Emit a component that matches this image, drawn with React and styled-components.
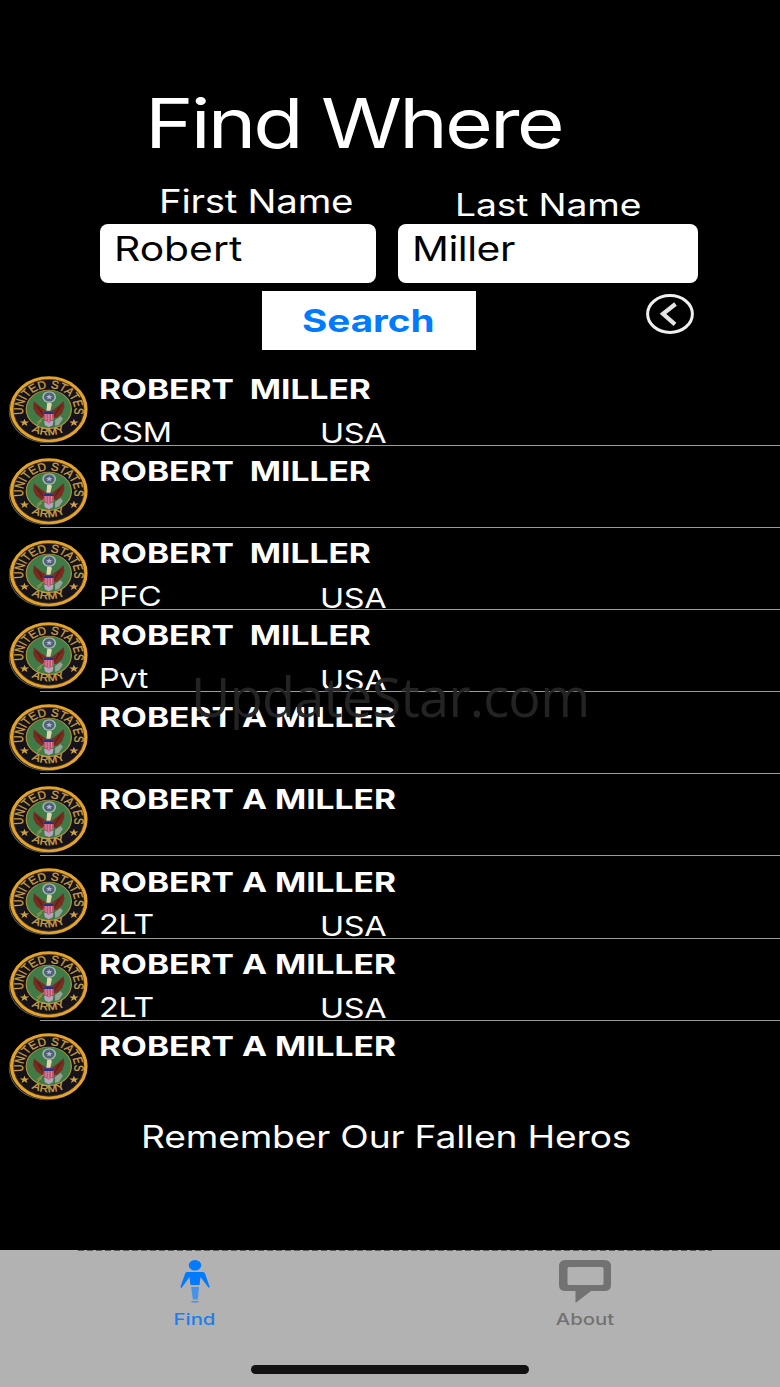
import styled, { createGlobalStyle } from "styled-components";

const GlobalStyle = createGlobalStyle`
  * { box-sizing: border-box; }
  body {
    margin: 0;
    background: #000;
    font-family: Inter, "Liberation Sans", sans-serif;
  }
`;

const Screen = styled.div`
  position: relative;
  display: flex;
  flex-direction: column;
  width: 780px;
  height: 1387px;
  overflow: hidden;
  background: #000;
  color: #fff;
`;

// wide lettering: the text is stretched sideways from its left edge
const Label = styled.span`
  display: block;
  white-space: pre;
  font-size: ${({ $size }) => $size}px;
  line-height: ${({ $line }) => $line}px;
  font-weight: ${({ $weight }) => $weight || 400};
  letter-spacing: ${({ $track }) => $track || 0}px;
  transform: scaleX(${({ $wide }) => $wide || 1.2});
  transform-origin: ${({ $from }) => $from || "left"} center;
`;

const Header = styled.header`
  padding: 84px 0 18px 145px;
`;

const Form = styled.div`
  display: grid;
  grid-template-columns: 276px 300px;
  column-gap: 22px;
  padding-left: 100px;
`;

const Caption = styled.div`
  height: 42px;
  padding: ${({ $top }) => $top || 0}px 0 0 ${({ $left }) => $left}px;
`;

const Field = styled.div`
  height: 58.5px;
  padding-left: 14px;
  border-radius: 8px;
  background: #fff;
  color: #000;
`;

const Actions = styled.div`
  display: flex;
  align-items: flex-start;
  padding: 8.5px 0 0 262px;
  height: 81.15px;
`;

const SearchButton = styled.button`
  width: 214px;
  height: 59px;
  margin: 0 170px 0 0;
  padding: 0 0 0 40px;
  border: 0;
  background: #fff;
  color: #007aff;
  font-family: inherit;
  text-align: left;
`;

const BackIcon = styled.svg`
  width: 48px;
  height: 40px;
  margin-top: 3px;
`;

const List = styled.div`
  height: 739.55px;
`;

const Row = styled.div`
  display: flex;
  height: 82.15px;
  padding-left: 7.5px;
`;

const Patch = styled.svg`
  flex: none;
  width: 80px;
  height: 68px;
  margin: 12px 11.5px 0 0;
`;

const Details = styled.div`
  flex: 1;
  padding-top: 9.1px;
`;

const Service = styled.div`
  display: grid;
  grid-template-columns: 221px 1fr;
  padding-top: 8.8px;
`;

const Branch = styled.div`
  padding-top: 1.8px;
`;

const Divider = styled.div`
  height: 1px;
  margin: -1px 0 0 40px;
  background: #9c9c9c;
`;

const Motto = styled.div`
  padding: 13.5px 0 0 140.5px;
`;

const TabBar = styled.nav`
  display: grid;
  grid-template-columns: 1fr 1fr;
  height: 137px;
  margin-top: auto;
  background: #b2b2b2;

  &::before {
    content: "";
    grid-column: 1 / -1;
    height: 1px;
    margin: 0 68px 0 78px;
    background: repeating-linear-gradient(90deg, #5c5c5c 0 6px, #b2b2b2 6px 9px);
  }
`;

const Tab = styled.div`
  display: flex;
  flex-direction: column;
  align-items: center;
  height: 136px;
  padding: 8px 1px 0 0;
  color: ${({ $active }) => ($active ? "#1b7fec" : "#727272")};
`;

const TabIcon = styled.svg`
  width: 54px;
  height: 45px;
  margin-bottom: 4.5px;
`;

const HomeIndicator = styled.div`
  position: absolute;
  left: 251px;
  bottom: 13px;
  width: 278px;
  height: 9px;
  border-radius: 5px;
  background: #121212;
`;

const Watermark = styled.div`
  position: absolute;
  left: 191px;
  top: 659px;
  color: rgba(36, 36, 36, 0.97);
  font: 400 54px/74px "Open Sans", "Noto Sans", sans-serif;
  letter-spacing: -0.72px;
  white-space: nowrap;
`;

const people = [
  { name: "ROBERT  MILLER", rank: "CSM" },
  { name: "ROBERT  MILLER" },
  { name: "ROBERT  MILLER", rank: "PFC" },
  { name: "ROBERT  MILLER", rank: "Pvt" },
  { name: "ROBERT A MILLER" },
  { name: "ROBERT A MILLER" },
  { name: "ROBERT A MILLER", rank: "2LT" },
  { name: "ROBERT A MILLER", rank: "2LT" },
  { name: "ROBERT A MILLER" },
];

const STAR = "M0-6 1.5-1.9 6-1.8 2.5.8 3.7 5 0 2.5-3.7 5-2.5.8-6-1.8-1.5-1.9Z";

const ArmyPatch = ({ id }) => (
  <Patch viewBox="0 0 102 102" preserveAspectRatio="none">
    <defs>
      <path id={`top${id}`} d="M20.5 59.5A32.6 32.6 0 1 1 83.5 59.5" />
      <path id={`low${id}`} d="M16 68A41.5 41.5 0 0 0 88 68" />
    </defs>
    <circle cx="49.5" cy="52.5" r="48.5" fill="#67686b" />
    <circle cx="50.8" cy="51.2" r="49" fill="#171310" />
    <circle cx="52" cy="50" r="47.3" fill="#15121a" stroke="#e2a22b" strokeWidth="4.4" />
    <circle cx="52" cy="50" r="44.8" fill="none" stroke="#6b4717" strokeWidth="0.8" />
    <circle cx="52" cy="50" r="28.8" fill="#3f7a47" stroke="#b6943e" strokeWidth="1.4" />
    <g fill="#cda245" fontFamily="Liberation Sans, sans-serif" fontSize="17">
      <text textLength="115" lengthAdjust="spacingAndGlyphs" stroke="#cda245" strokeWidth="0.4">
        <textPath href={`#top${id}`} startOffset="2">UNITED STATES</textPath>
      </text>
      <text fontSize="15" letterSpacing="0.6" textAnchor="middle" stroke="#cda245" strokeWidth="0.5">
        <textPath href={`#low${id}`} startOffset="50%">ARMY</textPath>
      </text>
      <path d={STAR} transform="translate(21 70)" />
      <path d={STAR} transform="translate(84 70)" />
    </g>
    {/* eagle with spread wings */}
    <path d="M33 38 42 47 49 52H56L62 47 71 38 72 46 69 56 62 63H43L36 57 32 48Z" fill="#7d2a1f" />
    <path d="M35 43 43 56M39 46 46 60M69 43 61 56M65 46 59 60" stroke="#4b211b" strokeWidth="1.2" />
    <path d="M46 62 37 70M43 67 36 75" stroke="#9b9446" strokeWidth="1.5" />
    <path d="M60 66 67 60 70 64 65 73 60 75Z" fill="#94a497" />
    <path d="M46 67H58L57 74 52 77 47 74Z" fill="#b3a5bd" />
    <path d="M50 40Q54 38 56 42L54 52H49Z" fill="#dfd5ae" />
    <circle cx="52.5" cy="31.5" r="7.8" fill="#51627b" stroke="#a6b8ad" strokeWidth="2" />
    <path d={STAR} transform="translate(52.5 31.5) scale(.7)" fill="#b8b7cf" />
    <path d="M45.5 53H58.5V65L52 70 45.5 65Z" fill="#bf5574" />
    <path d="M45.5 53H58.5V57H45.5Z" fill="#27327c" />
    <path d="M48.5 57V66M52 57V69M55.5 57V66" stroke="#e1a0b2" strokeWidth="1" />
  </Patch>
);

const Person = ({ data, num, last }) => (
  <>
    <Row>
      <ArmyPatch id={num} />
      <Details>
        <Label $size={27} $line={34} $weight={700} $wide={1.243}>{data.name}</Label>
        {data.rank && (
          <Service>
            <Label $size={27} $line={34} $track={-0.3}>{data.rank}</Label>
            <Branch>
              <Label $size={27} $line={34} $track={-0.3}>USA</Label>
            </Branch>
          </Service>
        )}
      </Details>
    </Row>
    {!last && <Divider />}
  </>
);

const App = () => {
  return (
    <Screen>
      <GlobalStyle />
      <Header>
        <Label $size={68.5} $line={80} $track={-2.4}>Find Where</Label>
      </Header>
      <Form>
        <Caption $left={58.5}>
          <Label $size={32} $line={40} $track={-0.2}>First Name</Label>
        </Caption>
        <Caption $left={56.5} $top={3}>
          <Label $size={31} $line={40} $track={-0.1}>Last Name</Label>
        </Caption>
        <Field>
          <Label $size={34} $line={50}>Robert</Label>
        </Field>
        <Field>
          <Label $size={34} $line={50} $track={-0.4}>Miller</Label>
        </Field>
      </Form>
      <Actions>
        <SearchButton>
          <Label $size={31} $line={58} $weight={700} $wide={1.245}>Search</Label>
        </SearchButton>
        <BackIcon viewBox="0 0 48 40">
          <ellipse cx="24" cy="20" rx="22.4" ry="18.4" fill="none" stroke="#f0f0f0" strokeWidth="3" />
          <path d="M29.5 10 17 19.8 29 30.3" fill="none" stroke="#e4e4e4" strokeWidth="4.2" />
        </BackIcon>
      </Actions>
      <List>
        {people.map((item, i) => (
          <Person key={i} data={item} num={i} last={i === people.length - 1} />
        ))}
      </List>
      <Motto>
        <Label $size={31} $line={40} $track={-0.14}>Remember Our Fallen Heros</Label>
      </Motto>
      <TabBar>
        <Tab $active>
          <TabIcon viewBox="0 0 54 45" fill="#007aff">
            <ellipse cx="27" cy="6.2" rx="6.2" ry="5.2" />
            <path d="M19 13H35Q36.5 13 37.2 15L41.7 28 40.8 29 32.5 18 31.5 26H22.5L21.5 18 13.5 29 12.4 28 17 15Q17.5 13 19 13Z" />
            <path d="M23.2 28H31L29.8 40.5H24.8Z" fill="#4495e8" />
            <path d="M23.5 42H30.5V43.5H23.5Z" fill="#4495e8" />
          </TabIcon>
          <Label $size={16} $line={20} $weight={500} $wide={1.27} $from="center">Find</Label>
        </Tab>
        <Tab>
          <TabIcon viewBox="0 0 54 45">
            <path
              fillRule="evenodd"
              fill="#727272"
              d="M7.5 1H46.5Q53 1 53 7.5V26Q53 32 46.5 32H33L17.5 44V32H7.5Q1 32 1 26V7.5Q1 1 7.5 1ZM11 8Q9.5 8 9.5 9.5V24.5Q9.5 26 11 26H44Q45.5 26 45.5 24.5V9.5Q45.5 8 44 8Z"
            />
          </TabIcon>
          <Label $size={16} $line={20} $weight={500} $wide={1.27} $from="center">About</Label>
        </Tab>
      </TabBar>
      <HomeIndicator />
      <Watermark>UpdateStar.com</Watermark>
    </Screen>
  );
};

export default App;
